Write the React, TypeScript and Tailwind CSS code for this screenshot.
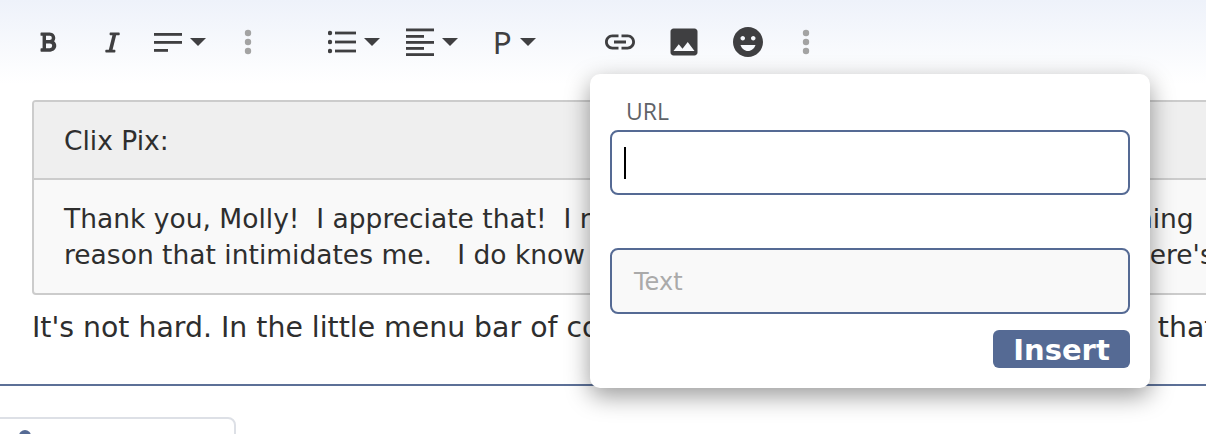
import { FaBold, FaItalic } from "react-icons/fa";
import { MdEmojiEmotions, MdImage, MdInsertLink } from "react-icons/md";

function Caret() {
  return (
    <svg width="16" height="8" viewBox="0 0 16 8" className="shrink-0 fill-[#3f3f41]">
      <path d="M0 0h16L8 8z" />
    </svg>
  );
}

function MoreDots() {
  return (
    <svg width="8" height="26" viewBox="0 0 8 26" className="fill-[#a3a3a3]">
      <circle cx="4" cy="4" r="3.2" />
      <circle cx="4" cy="13" r="3.2" />
      <circle cx="4" cy="22" r="3.2" />
    </svg>
  );
}

function AlignIcon() {
  return (
    <svg width="28" height="20" viewBox="0 0 28 20" className="fill-[#3f3f41]">
      <rect x="0" y="1" width="28" height="2.8" />
      <rect x="0" y="9" width="28" height="2.8" />
      <rect x="0" y="17" width="14" height="2.8" />
    </svg>
  );
}

function ListIcon() {
  return (
    <svg width="28" height="24" viewBox="0 0 28 24" className="fill-[#3f3f41]">
      <circle cx="2" cy="3" r="2.2" />
      <circle cx="2" cy="12" r="2.2" />
      <circle cx="2" cy="21" r="2.2" />
      <rect x="7" y="1.6" width="21" height="2.8" />
      <rect x="7" y="10.6" width="21" height="2.8" />
      <rect x="7" y="19.6" width="21" height="2.8" />
    </svg>
  );
}

function JustifyIcon() {
  return (
    <svg width="28" height="28" viewBox="0 0 28 28" className="fill-[#3f3f41]">
      <rect x="0" y="0.5" width="28" height="2.8" />
      <rect x="0" y="7" width="18" height="2.8" />
      <rect x="0" y="13" width="28" height="2.8" />
      <rect x="0" y="19" width="18" height="2.8" />
      <rect x="0" y="25.2" width="28" height="2.8" />
    </svg>
  );
}

function Toolbar() {
  return (
    <div className="flex h-[84px] items-center bg-gradient-to-b from-[#eef2fa] to-white text-[#3f3f41]">
      <div className="flex w-[96px] justify-center">
        <FaBold size={22} />
      </div>
      <div className="flex w-[32px] justify-center">
        <FaItalic size={23} />
      </div>
      <div className="ml-[26px] flex w-[52px] items-center gap-[8px]">
        <AlignIcon />
        <Caret />
      </div>
      <div className="ml-[38px] flex w-[8px]">
        <MoreDots />
      </div>
      <div className="ml-[76px] flex w-[52px] items-center gap-[8px]">
        <ListIcon />
        <Caret />
      </div>
      <div className="ml-[26px] flex w-[52px] items-center gap-[8px]">
        <JustifyIcon />
        <Caret />
      </div>
      <div className="ml-[35px] flex w-[43px] items-center">
        <span className="w-[27px] font-['Lato',sans-serif] text-[30px] leading-none">P</span>
        <Caret />
      </div>
      <div className="ml-[66px] flex w-[36px] justify-center">
        <MdInsertLink size={36} />
      </div>
      <div className="ml-[28px] flex w-[36px] justify-center">
        <MdImage size={36} />
      </div>
      <div className="ml-[28px] flex w-[36px] justify-center">
        <MdEmojiEmotions size={36} />
      </div>
      <div className="ml-[36px] flex w-[8px]">
        <MoreDots />
      </div>
    </div>
  );
}

function LinkPopup() {
  return (
    <div className="absolute left-[590px] top-[74px] flex h-[314px] w-[560px] flex-col rounded-[10px] bg-white px-[20px] pt-[22px] shadow-[0_8px_24px_rgba(0,0,0,0.4)]">
      <label className="ml-[16px] font-['Open_Sans',sans-serif] text-[23px] leading-[30px] text-[#5f6368]">URL</label>
      <div className="mt-[4px] flex h-[65px] items-center rounded-[8px] border-2 border-[#556a94] bg-white pl-[12px]">
        <div className="h-[32px] w-[2px] bg-black" />
      </div>
      <div className="mt-[53px] flex h-[66px] items-center rounded-[8px] border-2 border-[#556a94] bg-[#f9f9f9] pl-[22px] pt-[2px] text-[24px] text-[#aaaaaa]">
        Text
      </div>
      <div className="mt-[16px] flex justify-end">
        <button className="flex h-[38px] w-[137px] items-center justify-center rounded-[6px] bg-[#556a94] pt-[3px] text-[29px] font-bold text-white">
          Insert
        </button>
      </div>
    </div>
  );
}

export default function App() {
  return (
    <div className="relative h-[434px] w-[1206px] overflow-hidden bg-white font-['DejaVu_Sans',sans-serif] text-[#2e2e2e]">
      <Toolbar />
      <div className="h-[302px] overflow-hidden border-b-2 border-[#5c7097] pl-[32px] pt-[16px]">
        <div className="w-[1400px] overflow-hidden rounded-[4px] border-2 border-[#cccccc] bg-[#f9f9f9]">
          <div className="flex h-[78px] items-center border-b-2 border-[#cccccc] bg-[#efefef] pl-[30px] pt-[2px] text-[26.5px]">Clix Pix:</div>
          <div className="whitespace-pre pb-[20px] pl-[30px] pt-[21px] text-[26.5px] leading-[36px]">
            <div>Thank you, Molly!  I appreciate that!  I really want to learn to post photos, something</div>
            <div>reason that intimidates me.   I do know how to add a link though, so I suppose  there's still</div>
          </div>
        </div>
        <p className="mt-[15px] whitespace-pre text-[28.35px] leading-[36px]">It's not hard. In the little menu bar of comments, click the little picture icon for that</p>
      </div>
      <div className="-ml-[8px] mt-[31px] h-[40px] w-[244px] rounded-[8px] border-2 border-[#dde0e6] pl-[25px] pt-[11px]">
        <div className="h-[12px] w-[12px] rounded-full bg-[#556a94]" />
      </div>
      <LinkPopup />
    </div>
  );
}
